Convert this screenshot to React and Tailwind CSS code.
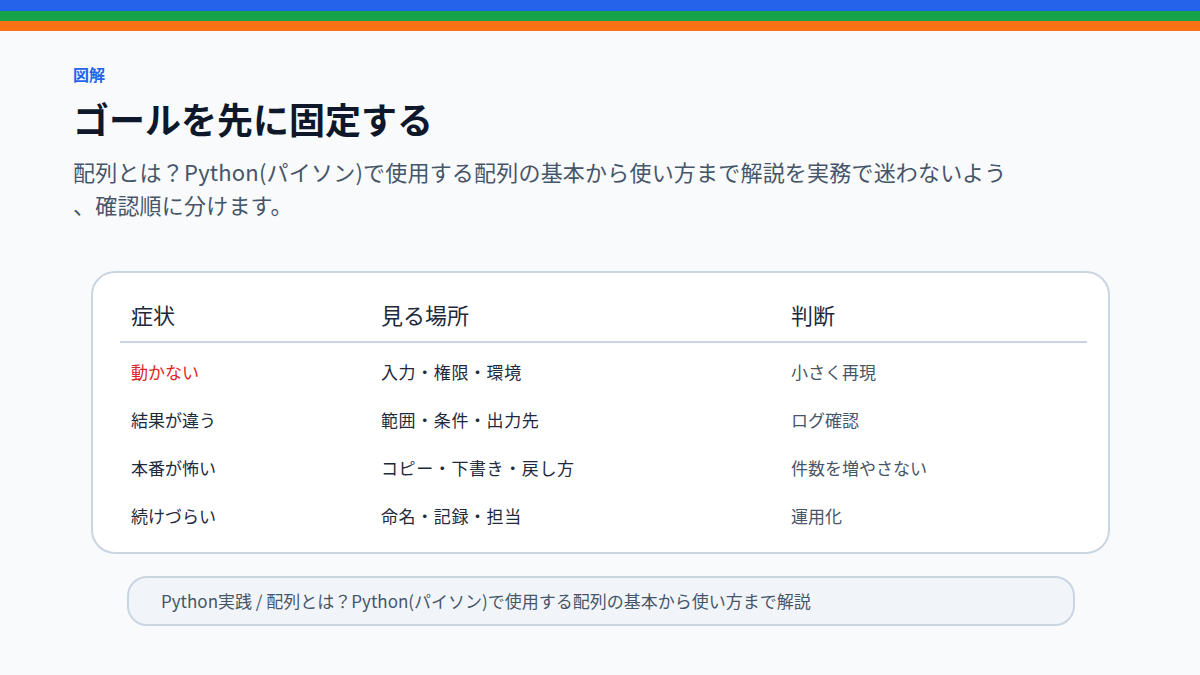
import React from 'react'

const rows = [
    { symptom: '動かない', place: '入力・権限・環境', judge: '小さく再現', alert: true },
    { symptom: '結果が違う', place: '範囲・条件・出力先', judge: 'ログ確認' },
    { symptom: '本番が怖い', place: 'コピー・下書き・戻し方', judge: '件数を増やさない' },
    { symptom: '続けづらい', place: '命名・記録・担当', judge: '運用化' },
]

export default function App() {
    return (
        <div className='min-h-[675px] bg-[#f8fafc] font-["Noto_Sans_CJK_JP","Noto_Sans",sans-serif]'>
            {/* top stripes */}
            <div className='h-[11px] bg-[#2563eb]' />
            <div className='h-[10px] bg-[#16a34a]' />
            <div className='h-[10px] bg-[#f97316]' />

            <div className='px-[73px] pt-[31px]'>
                <p className='text-[16px] leading-[24px] font-bold text-[#2563eb]'>
                    図解
                </p>
                <h1 className='mt-[8px] text-[36px] leading-[48px] font-bold text-[#0f172a]'>
                    ゴールを先に固定する
                </h1>
                <p className='mt-[13px] text-[22px] leading-[33px] text-[#475569] tracking-[0.2px]'>
                    <span className='block'>配列とは？Python(パイソン)で使用する配列の基本から使い方まで解説を実務で迷わないよう</span>
                    <span className='block'>、確認順に分けます。</span>
                </p>
            </div>

            {/* table card */}
            <div className='mx-[91px] mt-[50px] w-[1019px] rounded-[24px] border-2 border-[#cbd5e1] bg-white pl-[27px] pr-[21px] pt-[26px] pb-[12px]'>
                <div className='grid grid-cols-[250px_410px_1fr] border-b-2 border-[#cbd5e1] pb-[12px] text-[22px] leading-[30px] text-[#1e293b]'>
                    <div className='pl-[11px]'>症状</div>
                    <div className='pl-[11px]'>見る場所</div>
                    <div className='pl-[11px]'>判断</div>
                </div>
                <div className='pt-[5px]'>
                    {rows.map((r) => (
                        <div key={r.symptom} className='grid grid-cols-[250px_410px_1fr] h-[48px] items-center text-[17px]'>
                            <div className={r.alert ? 'pl-[11px] text-[#dc2626]' : 'pl-[11px] text-[#1e293b]'}>
                                {r.symptom}
                            </div>
                            <div className='pl-[11px] text-[#1e293b] tracking-[0.6px]'>{r.place}</div>
                            <div className='pl-[11px] text-[#475569]'>{r.judge}</div>
                        </div>
                    ))}
                </div>
            </div>

            {/* breadcrumb */}
            <div className='mx-[127px] mt-[22px] w-[948px] h-[50px] flex items-center rounded-[20px] border-2 border-[#cbd5e1] bg-[#f1f5f9] px-[32px] text-[17px] text-[#475569]'>
                Python実践 / 配列とは？Python(パイソン)で使用する配列の基本から使い方まで解説
            </div>
        </div>
    )
}
